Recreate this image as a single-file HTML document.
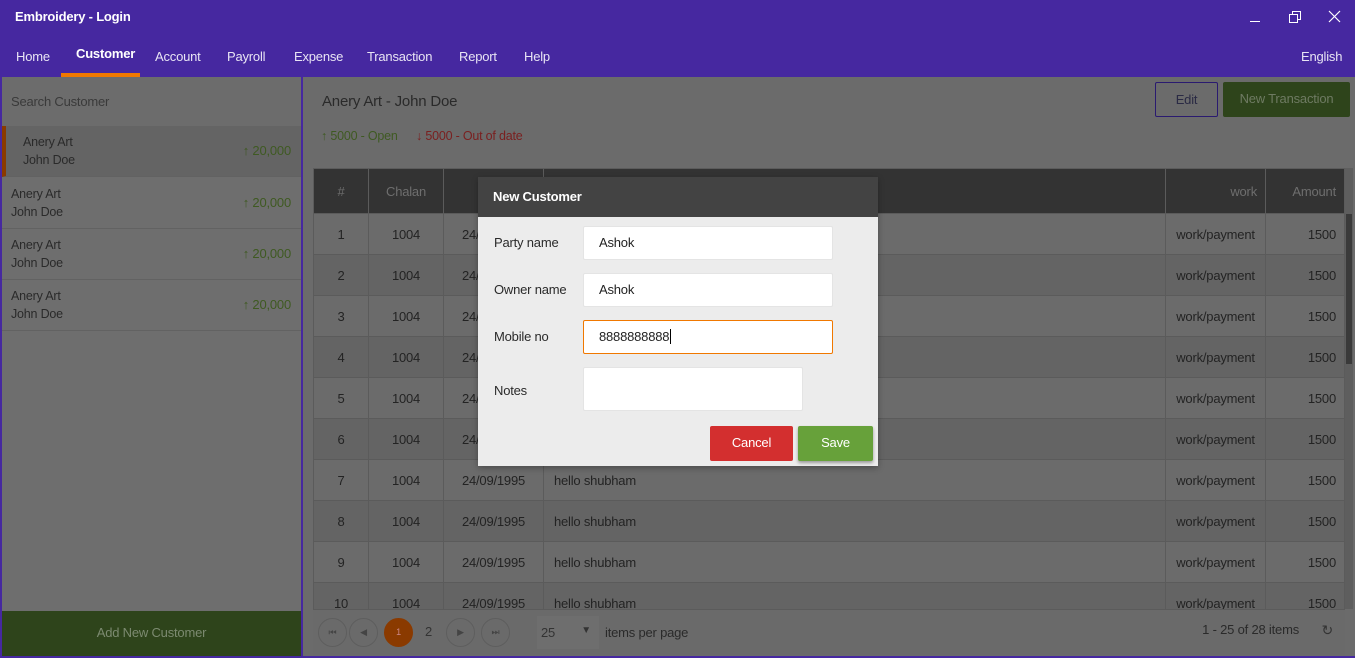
<!DOCTYPE html>
<html><head><style>
*{box-sizing:border-box;margin:0;padding:0}
body{width:1355px;height:658px;overflow:hidden;position:relative;background:#4628a0;font-family:"Liberation Sans",sans-serif;font-size:13px;color:#222;letter-spacing:-0.2px}
.top{position:absolute;left:0;top:0;width:1355px;height:77px;background:#4628a0;color:#fff}
.title{position:absolute;left:15px;top:9px;font-size:13px;font-weight:bold}
.nav span{position:absolute;top:49px;font-size:13px;color:#e8e4f4}
.ul{position:absolute;left:61px;top:73px;width:79px;height:4px;background:#f07800}
.side{position:absolute;left:2px;top:77px;width:299px;height:579px;background:#6e6e6e}
.search{position:absolute;left:0;top:0;width:299px;height:49px;color:#3a3a3a;padding:17px 9px;font-size:13px;background:#6c6c6c}
.item{position:absolute;left:0;width:299px;height:51px;border-bottom:1px solid #626262;color:#2a2a2a;padding:7px 9px;line-height:18px;font-size:12.5px}
.item .amt{position:absolute;right:10px;top:16px;color:#3f5a22;font-size:13px}
.add{position:absolute;left:0;bottom:0;width:299px;height:45px;background:#2e441b;color:#7c8a70;text-align:center;line-height:43px;font-size:13px}
.main{position:absolute;left:303px;top:77px;width:1052px;height:579px;background:#6b6b6b}
.hdr{position:absolute;left:19px;top:16px;font-size:15px;color:#2a2a2a}
.stat{position:absolute;top:52px;font-size:12.5px}
.btn{position:absolute;top:5px;height:35px;border-radius:2px;text-align:center;line-height:33px;font-size:13px}
.tw{position:absolute;left:10px;top:91px;width:1032px;height:441px;overflow:hidden}
table{border-collapse:collapse;width:1032px}
td,th{border:1px solid #5b5b5b;height:41px;text-align:center;font-weight:normal;font-size:13px;color:#232323}
th{background:#333;color:#6e6e6e;height:45px}
tr:nth-child(even) td{background:#6b6b6b}
tr:nth-child(odd) td{background:#646464}
.sb{position:absolute;left:1042px;top:91px;width:8px;height:441px;background:#5e5e5e}
.sb i{position:absolute;left:1px;top:46px;width:6px;height:150px;background:#3a3a3a}
.pager{position:absolute;left:10px;top:532px;width:1032px;height:46px;background:#6a6a6a;border-top:1px solid #5b5b5b}
.pc{position:absolute;top:8px;width:29px;height:29px;border-radius:50%;border:1px solid #5e5e5e;color:#444;font-size:9px;text-align:center;line-height:27px}
.modal{position:absolute;left:478px;top:177px;width:400px;height:289px;background:#ececec;box-shadow:0 2px 6px rgba(0,0,0,.3)}
.mh{height:40px;background:#434343;color:#fff;font-weight:bold;padding:12px 15px;font-size:13px}
.lab{position:absolute;left:16px;font-size:13px;color:#2a2a2a}
.inp{position:absolute;left:105px;width:250px;height:34px;background:#fff;border:1px solid #e4e4e4;border-radius:2px;padding:8px 15px;font-size:13px;color:#222}
</style></head><body>
<div class="top">
<div class="title">Embroidery - Login</div>
<div class="nav"><span style="left:16px">Home</span><span style="left:76px;top:46px;color:#fff;font-weight:bold">Customer</span><span style="left:155px">Account</span><span style="left:227px">Payroll</span><span style="left:294px">Expense</span><span style="left:367px">Transaction</span><span style="left:459px">Report</span><span style="left:524px">Help</span><span style="left:1301px">English</span></div>
<div class="ul"></div>
<div style="position:absolute;left:1250px;top:21px;width:10px;height:1px;background:#fff"></div>
<svg style="position:absolute;left:1288px;top:10px" width="14" height="14" viewBox="0 0 14 14" fill="none" stroke="#fff" stroke-width="1"><rect x="1.5" y="4.5" width="8" height="8"/><path d="M4.5 4.5V1.5h8v8h-3"/></svg>
<svg style="position:absolute;left:1328px;top:10px" width="13" height="13" viewBox="0 0 13 13" stroke="#fff" stroke-width="1.2"><path d="M1 1L12 12M12 1L1 12"/></svg>
</div>
<div class="side">
<div class="search">Search Customer</div>
<div class="item" style="top:49px;background:#646464;border-left:4px solid #8a3a00;padding-left:17px">Anery Art<br>John Doe<span class="amt">↑ 20,000</span></div>
<div class="item" style="top:101px">Anery Art<br>John Doe<span class="amt">↑ 20,000</span></div>
<div class="item" style="top:152px">Anery Art<br>John Doe<span class="amt">↑ 20,000</span></div>
<div class="item" style="top:203px">Anery Art<br>John Doe<span class="amt">↑ 20,000</span></div>
<div class="add">Add New Customer</div>
</div>
<div class="main">
<div class="hdr">Anery Art - John Doe</div>
<div class="stat" style="left:18px;color:#3f5a22">↑ 5000 - Open</div>
<div class="stat" style="left:113px;color:#7a2020">↓ 5000 - Out of date</div>
<div class="btn" style="left:852px;width:63px;border:1px solid #2a1a70;color:#2a2a44">Edit</div>
<div class="btn" style="left:920px;width:127px;background:#2e441b;color:#6e7a62">New Transaction</div>
<div class="tw"><table>
<tr><th style="width:55px">#</th><th style="width:75px">Chalan</th><th style="width:100px"></th><th></th><th style="width:100px;text-align:right;padding-right:8px">work</th><th style="width:79px;text-align:right;padding-right:8px">Amount</th></tr>
<tr><td>1</td><td>1004</td><td>24/09/1995</td><td style="text-align:left;padding-left:10px">hello shubham</td><td>work/payment</td><td style="text-align:right;padding-right:8px">1500</td></tr>
<tr><td>2</td><td>1004</td><td>24/09/1995</td><td style="text-align:left;padding-left:10px">hello shubham</td><td>work/payment</td><td style="text-align:right;padding-right:8px">1500</td></tr>
<tr><td>3</td><td>1004</td><td>24/09/1995</td><td style="text-align:left;padding-left:10px">hello shubham</td><td>work/payment</td><td style="text-align:right;padding-right:8px">1500</td></tr>
<tr><td>4</td><td>1004</td><td>24/09/1995</td><td style="text-align:left;padding-left:10px">hello shubham</td><td>work/payment</td><td style="text-align:right;padding-right:8px">1500</td></tr>
<tr><td>5</td><td>1004</td><td>24/09/1995</td><td style="text-align:left;padding-left:10px">hello shubham</td><td>work/payment</td><td style="text-align:right;padding-right:8px">1500</td></tr>
<tr><td>6</td><td>1004</td><td>24/09/1995</td><td style="text-align:left;padding-left:10px">hello shubham</td><td>work/payment</td><td style="text-align:right;padding-right:8px">1500</td></tr>
<tr><td>7</td><td>1004</td><td>24/09/1995</td><td style="text-align:left;padding-left:10px">hello shubham</td><td>work/payment</td><td style="text-align:right;padding-right:8px">1500</td></tr>
<tr><td>8</td><td>1004</td><td>24/09/1995</td><td style="text-align:left;padding-left:10px">hello shubham</td><td>work/payment</td><td style="text-align:right;padding-right:8px">1500</td></tr>
<tr><td>9</td><td>1004</td><td>24/09/1995</td><td style="text-align:left;padding-left:10px">hello shubham</td><td>work/payment</td><td style="text-align:right;padding-right:8px">1500</td></tr>
<tr><td>10</td><td>1004</td><td>24/09/1995</td><td style="text-align:left;padding-left:10px">hello shubham</td><td>work/payment</td><td style="text-align:right;padding-right:8px">1500</td></tr>
</table></div>
<div class="sb"><i></i></div>
<div class="pager">
<div class="pc" style="left:5px">⏮</div><div class="pc" style="left:36px">◀</div>
<div class="pc" style="left:71px;background:#8a3a00;border-color:#8a3a00;color:#c88">1</div>
<div style="position:absolute;left:112px;top:14px;color:#333">2</div>
<div class="pc" style="left:133px">▶</div><div class="pc" style="left:168px">⏭</div>
<div style="position:absolute;left:224px;top:6px;width:62px;height:33px;background:#6e6e6e;padding:9px 4px;color:#333">25<span style="position:absolute;right:8px;font-size:10px">▼</span></div>
<div style="position:absolute;left:292px;top:15px;color:#2a2a2a">items per page</div>
<div style="position:absolute;right:46px;top:12px;color:#2a2a2a">1 - 25 of 28 items</div>
<div style="position:absolute;right:12px;top:12px;color:#333;font-size:14px">↻</div>
</div>
</div>
<div class="modal">
<div class="mh">New Customer</div>
<div class="lab" style="top:58px">Party name</div><div class="inp" style="top:49px">Ashok</div>
<div class="lab" style="top:105px">Owner name</div><div class="inp" style="top:96px">Ashok</div>
<div class="lab" style="top:152px">Mobile no</div><div class="inp" style="top:143px;border-color:#f07800">8888888888<span style="border-left:1px solid #000;margin-left:1px"></span></div>
<div class="lab" style="top:206px">Notes</div><div class="inp" style="top:190px;width:220px;height:44px"></div>
<div style="position:absolute;left:232px;top:249px;width:83px;height:35px;background:#d32f2f;color:#fff;text-align:center;line-height:33px;border-radius:2px">Cancel</div>
<div style="position:absolute;left:320px;top:249px;width:75px;height:35px;background:#67a13a;color:#fff;text-align:center;line-height:33px;border-radius:2px;box-shadow:0 2px 3px rgba(0,0,0,.35)">Save</div>
</div>
</body></html>
